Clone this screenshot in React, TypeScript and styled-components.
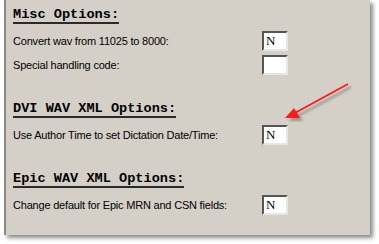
import styled, { createGlobalStyle } from 'styled-components';

const GlobalStyle = createGlobalStyle`
	html, body {
		margin: 0;
		padding: 0;
		background: #ffffff;
	}
`;

const sections = [
	{
		title: 'Misc Options:',
		rows: [
			{ label: 'Convert wav from 11025 to 8000:', value: 'N' },
			{ label: 'Special handling code:', value: '' },
		],
	},
	{
		title: 'DVI WAV XML Options:',
		rows: [{ label: 'Use Author Time to set Dictation Date/Time:', value: 'N' }],
	},
	{
		title: 'Epic WAV XML Options:',
		rows: [{ label: 'Change default for Epic MRN and CSN fields:', value: 'N' }],
	},
];

const App = () => {
	return (
		<>
			<GlobalStyle />
			<Page>
				<Panel>
					{sections.map((section) => (
						<Section key={section.title}>
							<Heading>
								<span>{section.title}</span>
							</Heading>
							<Rows>
								{section.rows.map((row) => (
									<Row key={row.label}>
										<Label>{row.label}</Label>
										<Field readOnly value={row.value} />
									</Row>
								))}
							</Rows>
						</Section>
					))}
					<Arrow width="70" height="42" viewBox="0 0 70 42">
						<defs>
							<filter id="blur" x="-20%" y="-20%" width="140%" height="140%">
								<feGaussianBlur stdDeviation="1.2" />
							</filter>
						</defs>
						<g filter="url(#blur)" opacity="0.45">
							<line x1="67" y1="7" x2="12" y2="37" stroke="#555" strokeWidth="2.2" />
							<polygon points="5,41 13,31 19,41" fill="#555" />
						</g>
						<line x1="64" y1="4" x2="9" y2="34" stroke="#ff1a1a" strokeWidth="1.8" />
						<polygon points="1,38 10,28 16,38" fill="#ff1a1a" />
					</Arrow>
				</Panel>
			</Page>
		</>
	);
};

export default App;

const Page = styled.div`
	width: 379px;
	height: 244px;
	background: #ffffff;
	padding-left: 4px;
	box-sizing: border-box;
`;

const Panel = styled.div`
	position: relative;
	width: 366px;
	height: 235px;
	box-sizing: border-box;
	background: #d4d0c8;
	border-left: 2px solid #8c8a86;
	padding: 7px 0 0 7px;
	box-shadow: 3px 3px 4px rgba(0, 0, 0, 0.45);
	display: flex;
	flex-direction: column;
	gap: 26px;
`;

const Section = styled.div`
	display: flex;
	flex-direction: column;
	gap: 6px;
`;

const Heading = styled.div`
	font-family: 'Liberation Mono', 'Courier New', monospace;
	font-weight: bold;
	font-size: 13.6px;
	line-height: 15px;
	color: #000;

	span {
		display: inline-block;
		border-bottom: 2px solid #2a2a2a;
	}
`;

const Rows = styled.div`
	display: flex;
	flex-direction: column;
	gap: 4px;
	margin-top: 1px;
`;

const Row = styled.div`
	display: grid;
	grid-template-columns: 249px 26px;
	align-items: center;
	height: 20px;
`;

const Label = styled.span`
	font-family: 'Liberation Sans', Arial, sans-serif;
	font-size: 11px;
	color: #000;
	letter-spacing: -0.2px;
`;

const Field = styled.input`
	width: 26px;
	height: 20px;
	box-sizing: border-box;
	margin: 0;
	padding: 0 0 0 2px;
	background: #ffffff;
	border-style: solid;
	border-width: 2px;
	border-color: #555555 #e8e6e2 #e8e6e2 #555555;
	font-family: 'Liberation Serif', 'Times New Roman', serif;
	font-size: 13px;
	color: #000;
	outline: none;
`;

const Arrow = styled.svg`
	position: absolute;
	left: 278px;
	top: 80px;
	overflow: visible;
`;
